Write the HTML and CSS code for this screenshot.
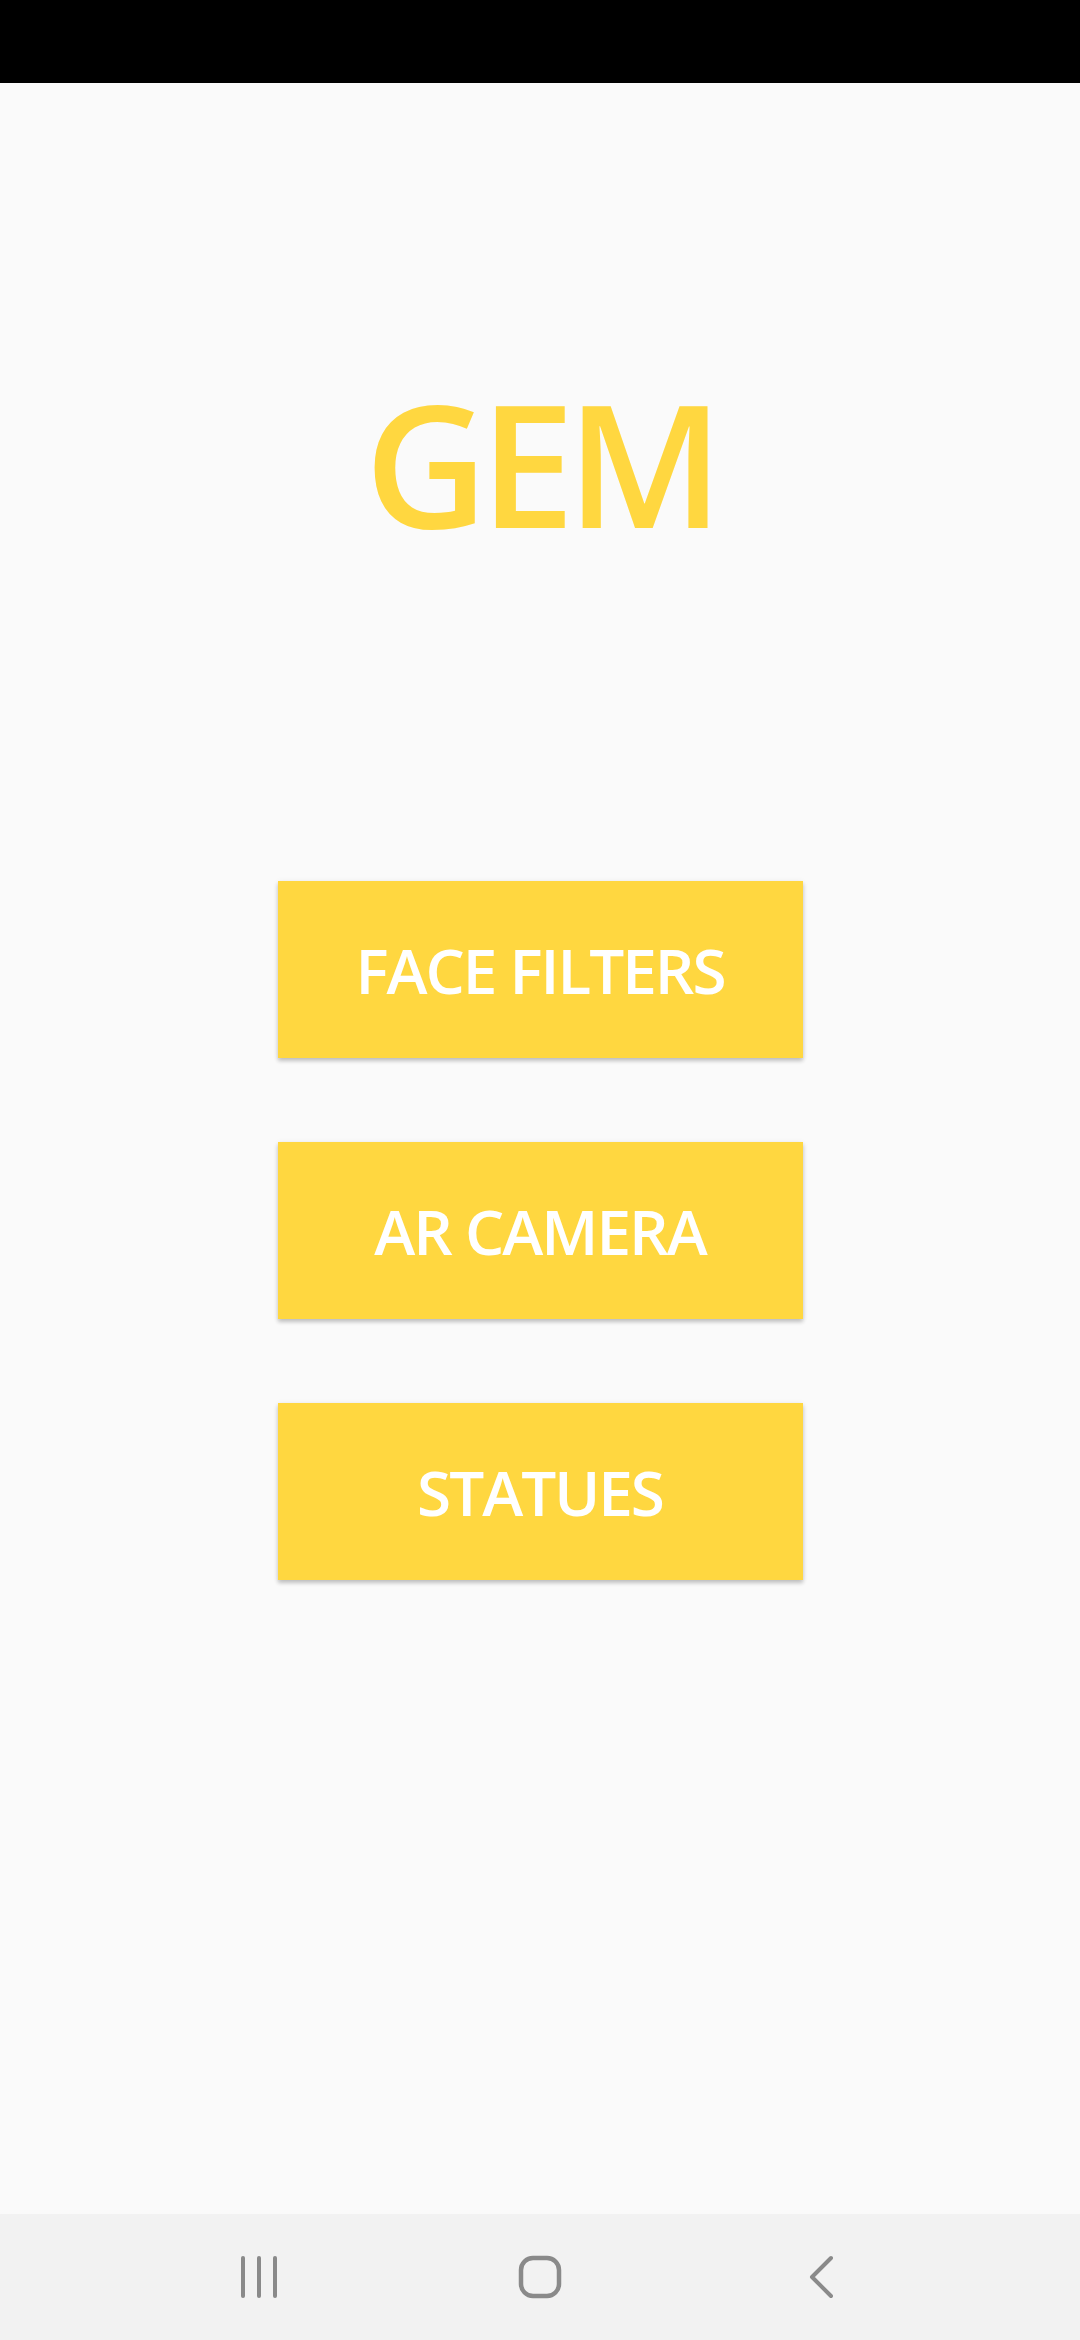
FILE: index.html
```html
<!DOCTYPE html>
<html>
<head>
<meta charset="utf-8">
<link rel="stylesheet" href="styles.css">
</head>
<body>
<div class="screen">
  <div class="status-bar"></div>
  <main class="content">
    <h1 class="title">GEM</h1>
    <div class="menu">
      <button class="menu-btn">FACE FILTERS</button>
      <button class="menu-btn">AR CAMERA</button>
      <button class="menu-btn">STATUES</button>
    </div>
  </main>
  <nav class="nav-bar">
    <div class="nav-item">
      <svg width="40" height="44" viewBox="0 0 40 44"><g stroke="#8a8a8a" stroke-width="4" stroke-linecap="round"><line x1="4" y1="3" x2="4" y2="41"/><line x1="20" y1="3" x2="20" y2="41"/><line x1="36" y1="3" x2="36" y2="41"/></g></svg>
    </div>
    <div class="nav-item">
      <svg width="44" height="44" viewBox="0 0 44 44"><rect x="3" y="3" width="38" height="38" rx="12" ry="12" fill="none" stroke="#8a8a8a" stroke-width="4.5"/></svg>
    </div>
    <div class="nav-item">
      <svg width="30" height="44" viewBox="0 0 30 44"><polyline points="25,3 6,22 25,41" fill="none" stroke="#8a8a8a" stroke-width="4" stroke-linecap="round" stroke-linejoin="round"/></svg>
    </div>
  </nav>
</div>
</body>
</html>
```

FILE: styles.css
```css
* { box-sizing: border-box; }
html, body {
  margin: 0;
  padding: 0;
  background: #fafafa;
}
.screen {
  width: 1080px;
  height: 2340px;
  display: flex;
  flex-direction: column;
  font-family: "Open Sans", "Noto Sans", sans-serif;
}
.status-bar {
  height: 83px;
  background: #000;
  flex: none;
}
.content {
  flex: 1;
  background: #fafafa;
  display: flex;
  flex-direction: column;
  align-items: center;
}
.title {
  margin: 294px 0 0 0;
  font-size: 170px;
  line-height: 170px;
  height: 170px;
  font-weight: 600;
  color: #ffd740;
  letter-spacing: -8px;
}
.menu {
  margin-top: 334px;
  width: 525px;
  display: flex;
  flex-direction: column;
  gap: 84px;
}
.menu-btn {
  height: 177px;
  border: none;
  background: #ffd740;
  color: #fff;
  font-family: "Open Sans", "Noto Sans", sans-serif;
  font-size: 62px;
  font-weight: 600;
  letter-spacing: -2px;
  padding: 0;
  box-shadow: 0 3px 4px rgba(0,0,0,0.2), 0 1px 6px rgba(0,0,0,0.08);
}
.nav-bar {
  height: 126px;
  flex: none;
  background: #f2f2f2;
  display: grid;
  grid-template-columns: repeat(3, 281px);
  justify-content: center;
  align-items: center;
}
.nav-item {
  display: flex;
  justify-content: center;
  align-items: center;
}
.nav-item svg { display: block; }
```
